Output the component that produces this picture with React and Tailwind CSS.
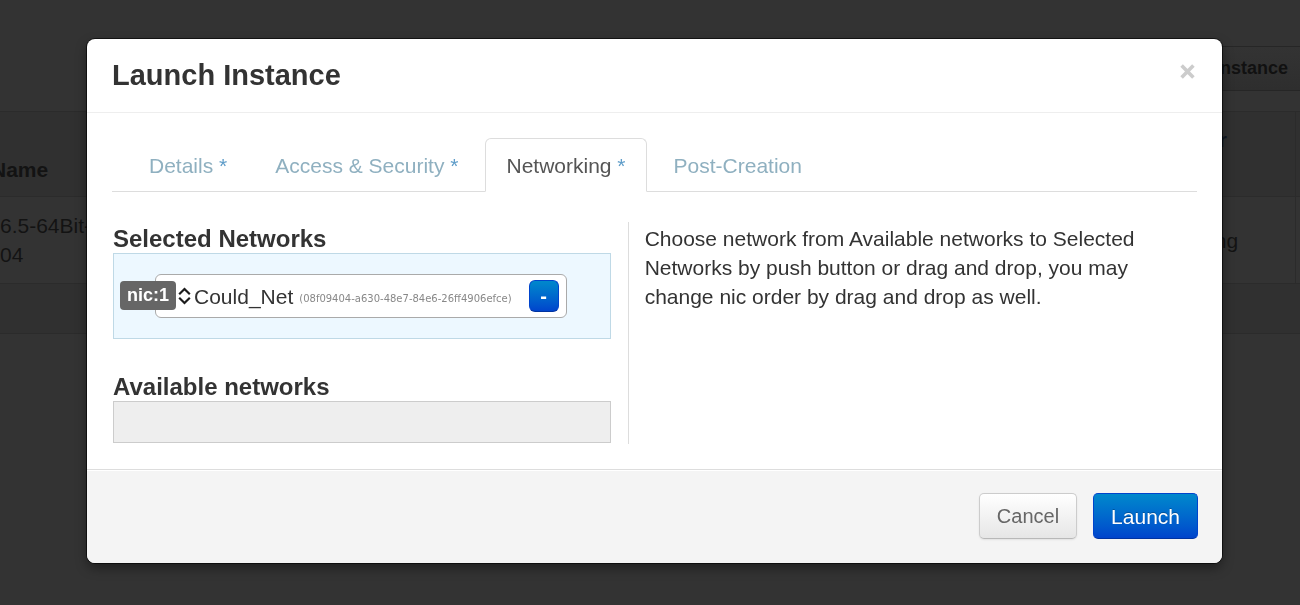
import React from "react";

function InstancesPage() {
  return (
    <main
      aria-hidden="true"
      className="min-h-screen overflow-hidden bg-[#333333] pt-[46px] text-[21px] leading-[29px] text-[#131313]"
    >
      <div className="flex justify-end">
        <button
          type="button"
          tabIndex={-1}
          className="h-[45px] border-y border-[#262626] bg-linear-to-b from-[#333333] to-[#2e2e2e] px-3 text-[18px] font-bold text-[#111111]"
        >
          Launch Instance
        </button>
      </div>
      <div className="-ml-[9px] mt-5">
        <table className="w-full table-fixed border-collapse text-left">
          <colgroup>
            <col />
            <col className="w-[143px]" />
            <col className="w-[5px]" />
          </colgroup>
          <thead className="bg-[#303030]">
            <tr className="h-[85px] border-y border-[#2b2b2b]">
              <th className="p-0 pb-3 align-bottom font-bold">Name</th>
              <th className="border-r border-[#2b2b2b] py-0 pl-3 pr-10 font-bold text-[#101722]">
                Power State
              </th>
              <th className="p-0"></th>
            </tr>
          </thead>
          <tbody>
            <tr className="h-[87px] border-b border-[#2b2b2b]">
              <td className="py-0 pl-[9px]">
                6.5-64Bit-
                <br />
                04
              </td>
              <td className="border-r border-[#2b2b2b] py-0 pl-2">Running</td>
              <td className="p-0"></td>
            </tr>
          </tbody>
          <tfoot className="bg-[#303030]">
            <tr className="h-[50px] border-b border-[#2b2b2b]">
              <td colSpan={3} className="p-0"></td>
            </tr>
          </tfoot>
        </table>
      </div>
    </main>
  );
}

const tabs = [
  { label: "Details", required: true },
  { label: "Access & Security", required: true },
  { label: "Networking", required: true, active: true },
  { label: "Post-Creation" },
];

function Tabs() {
  return (
    <nav className="flex gap-[6px] border-b border-[#dddddd] pl-4">
      {tabs.map((tab) => (
        <a
          key={tab.label}
          href="#"
          className={
            tab.active
              ? "-mb-px rounded-t-md border border-[#dddddd] border-b-white bg-white px-5 pb-[11px] pt-3 text-[#555555]"
              : "border border-transparent px-5 pb-[10px] pt-3 text-[#8fb0c0]"
          }
        >
          {tab.label}
          {tab.required && <span className="text-[#5f9dc9]"> *</span>}
        </a>
      ))}
    </nav>
  );
}

function SortHandle() {
  return (
    <svg width="13" height="18" viewBox="0 0 13 18" fill="none" stroke="#1c1c1c" strokeWidth="2.2" aria-hidden="true">
      <path d="M1.2 7.2 6.5 2l5.3 5.2M1.2 10.8 6.5 16l5.3-5.2" />
    </svg>
  );
}

function SelectedNetwork() {
  return (
    <li className="ml-[41px] mr-[43px] flex h-11 items-center rounded-[6px] border border-[#aaaaaa] bg-white pr-[7px]">
      <span className="-ml-9 mb-px h-[29px] rounded-[4px] bg-[#666666] px-[7px] text-[18px] font-bold leading-[28px] text-white">
        nic:1
      </span>
      <span className="ml-[2px] mr-[3px]">
        <SortHandle />
      </span>
      <span className="text-[21px] text-[#333333]">Could_Net</span>
      <span className="ml-[6px] mt-1 whitespace-nowrap font-['DejaVu_Sans',sans-serif] text-[10px] text-[#888888]">
        (08f09404-a630-48e7-84e6-26ff4906efce)
      </span>
      <button
        type="button"
        aria-label="Remove Could_Net"
        className="ml-auto h-8 w-[30px] shrink-0 rounded-[6px] border border-[#0044cc] border-b-[#0033a0] bg-linear-to-b from-[#0088cc] to-[#0044cc] text-[20px] font-bold leading-none text-white"
      >
        -
      </button>
    </li>
  );
}

export default function App() {
  return (
    <div className="font-['Liberation_Sans',Arial,sans-serif]">
      <InstancesPage />
      <div className="fixed inset-0 overflow-auto pb-10 pl-[87px] pr-[78px] pt-[39px]">
        <section
          role="dialog"
          aria-labelledby="dialog-title"
          className="overflow-hidden rounded-lg bg-white text-[21px] leading-[29px] text-[#333333] shadow-[0_0_0_1px_rgba(0,0,0,0.6),0_5px_12px_rgba(0,0,0,0.4)]"
        >
          <header className="flex h-[74px] items-center justify-between border-b border-[#eeeeee] px-[25px]">
            <h1 id="dialog-title" className="text-[29px] font-bold">
              Launch Instance
            </h1>
            <button type="button" aria-label="Close" className="mb-2 pr-[2px] text-[#cccccc]">
              <svg width="15" height="15" viewBox="0 0 15 15" stroke="currentColor" strokeWidth="3.6" aria-hidden="true">
                <path d="M1.6 1.6l11.8 11.8M13.4 1.6l-11.8 11.8" />
              </svg>
            </button>
          </header>

          <div className="p-[25px]">
            <Tabs />
            <div className="mt-[30px] grid grid-cols-[10fr_11fr]">
              <div className="border-r border-[#dddddd] pl-px pr-[17px]">
                <h2 className="pt-[2px] text-[24px] font-bold leading-[29px]">Selected Networks</h2>
                <ul className="border border-[#bfd9e6] bg-[#edf8ff] py-5">
                  <SelectedNetwork />
                </ul>
                <h2 className="pt-[33px] text-[24px] font-bold leading-[29px]">Available networks</h2>
                <ul className="mb-px h-[42px] border border-[#cccccc] bg-[#eeeeee]"></ul>
              </div>
              <p className="pl-4 pt-[2px]">
                Choose network from Available networks to Selected Networks by push button or drag and drop, you may
                change nic order by drag and drop as well.
              </p>
            </div>
          </div>

          <footer className="flex justify-end gap-4 border-t border-[#dddddd] bg-[#f4f4f4] px-6 pb-6 pt-[23px] shadow-[inset_0_1px_0_#ffffff]">
            <button
              type="button"
              className="h-[46px] rounded-[5px] border border-[#cccccc] border-b-[#b8b8b8] bg-linear-to-b from-white to-[#e6e6e6] px-[17px] text-[20px] text-[#666666] shadow-[0_1px_2px_rgba(0,0,0,0.08)]"
            >
              Cancel
            </button>
            <button
              type="button"
              className="h-[46px] rounded-[5px] border border-[#0044cc] border-b-[#0033a0] bg-linear-to-b from-[#0088cc] to-[#0044cc] px-[17px] text-[21px] text-white text-shadow-[0_-1px_0_rgba(0,0,0,0.25)]"
            >
              Launch
            </button>
          </footer>
        </section>
      </div>
    </div>
  );
}
